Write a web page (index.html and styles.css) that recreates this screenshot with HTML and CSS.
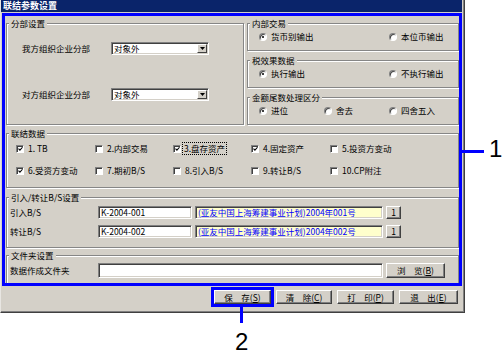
FILE: index.html
```html
<!DOCTYPE html>
<html lang="zh-CN">
<head>
<meta charset="utf-8">
<title>联结参数设置</title>
<link rel="stylesheet" href="styles.css">
</head>
<body>
<div class="stage">
  <div class="window">
    <div class="titlebar">联结参数设置</div>
    <div class="panel">
      <div class="row1">
        <div class="group g-branch">
          <div class="legend">分部设置</div>
          <div class="branch-grid">
            <span class="lbl">我方组织企业分部</span>
            <div class="select"><span class="sel-text">对象外</span><span class="ddbtn"><svg width="5" height="3" viewBox="0 0 5 3"><polygon points="0,0 5,0 2.5,3" fill="#000"/></svg></span></div>
            <span class="lbl">对方组织企业分部</span>
            <div class="select"><span class="sel-text">对象外</span><span class="ddbtn"><svg width="5" height="3" viewBox="0 0 5 3"><polygon points="0,0 5,0 2.5,3" fill="#000"/></svg></span></div>
          </div>
        </div>
        <div class="rcol">
          <div class="group g-opt">
            <div class="legend">内部交易</div>
            <div class="radios">
              <span class="opt"><span class="radio on"></span>货币别输出</span>
              <span class="opt c3"><span class="radio"></span>本位币输出</span>
            </div>
          </div>
          <div class="group g-opt">
            <div class="legend">税效果数据</div>
            <div class="radios">
              <span class="opt"><span class="radio on"></span>执行输出</span>
              <span class="opt c3"><span class="radio"></span>不执行输出</span>
            </div>
          </div>
          <div class="group g-opt">
            <div class="legend">金额尾数处理区分</div>
            <div class="radios">
              <span class="opt"><span class="radio on"></span>进位</span>
              <span class="opt"><span class="radio"></span>舍去</span>
              <span class="opt"><span class="radio"></span>四舍五入</span>
            </div>
          </div>
        </div>
      </div>

      <div class="group g-data">
        <div class="legend">联结数据</div>
        <div class="checks">
          <span class="chk"><span class="box"><svg width="6" height="6" viewBox="0 0 6 6"><path d="M0.6 2.6 L2.3 4.4 L5.4 0.9" stroke="#000" stroke-width="1.3" fill="none"/></svg></span>1. TB</span>
          <span class="chk"><span class="box"></span>2.内部交易</span>
          <span class="chk"><span class="box"><svg width="6" height="6" viewBox="0 0 6 6"><path d="M0.6 2.6 L2.3 4.4 L5.4 0.9" stroke="#000" stroke-width="1.3" fill="none"/></svg></span><span class="focus">3.盘存资产</span></span>
          <span class="chk"><span class="box"><svg width="6" height="6" viewBox="0 0 6 6"><path d="M0.6 2.6 L2.3 4.4 L5.4 0.9" stroke="#000" stroke-width="1.3" fill="none"/></svg></span>4.固定资产</span>
          <span class="chk"><span class="box"></span>5.投资方变动</span>
          <span class="chk"><span class="box"><svg width="6" height="6" viewBox="0 0 6 6"><path d="M0.6 2.6 L2.3 4.4 L5.4 0.9" stroke="#000" stroke-width="1.3" fill="none"/></svg></span>6.受资方变动</span>
          <span class="chk"><span class="box"></span>7.期初B/S</span>
          <span class="chk"><span class="box"></span>8.引入B/S</span>
          <span class="chk"><span class="box"></span>9.转让B/S</span>
          <span class="chk"><span class="box"></span>10.CP附注</span>
        </div>
      </div>

      <div class="group g-bs">
        <div class="legend">引入/转让B/S设置</div>
        <div class="bs-grid">
          <span class="lbl">引入B/S</span>
          <div class="field">K-2004-001</div>
          <div class="field yellow">(亚友中国上海筹建事业计划)2004年001号</div>
          <div class="btn mini">1</div>
          <span class="lbl">转让B/S</span>
          <div class="field">K-2004-002</div>
          <div class="field yellow">(亚友中国上海筹建事业计划)2004年002号</div>
          <div class="btn mini">1</div>
        </div>
      </div>

      <div class="group g-folder">
        <div class="legend">文件夹设置</div>
        <div class="folder-grid">
          <span class="lbl">数据作成文件夹</span>
          <div class="field tall"></div>
          <div class="btn browse">浏　览(<u>B</u>)</div>
        </div>
      </div>
    </div>

    <div class="buttons">
      <div class="btn act w57 save">保　存(<u>S</u>)</div>
      <div class="btn act w56">清　除(<u>C</u>)</div>
      <div class="btn act w57">打　印(<u>P</u>)</div>
      <div class="btn act w59">退　出(<u>E</u>)</div>
    </div>
  </div>

  <div class="callout-line c1-line"></div>
  <div class="callout-num c1-num">1</div>
  <div class="callout-line c2-line"></div>
  <div class="callout-num c2-num">2</div>
</div>
</body>
</html>
```

FILE: styles.css
```css
* { box-sizing: border-box; }

body {
  margin: 0;
  background: #fff;
  font-family: "Noto Sans CJK SC", sans-serif;
  font-size: 8.5px;
  line-height: 11px;
  color: #000;
}

.stage {
  position: relative;
  width: 503px;
  height: 359px;
}

.window {
  width: 465px;
  height: 313px;
  background: #d4d0c8;
  border-left: 1px solid #e8e6e2;
  border-right: 1px solid #404040;
  border-bottom: 1px solid #404040;
  box-shadow: inset -1px -1px 0 #808080;
}

.titlebar {
  width: 461px;
  height: 12px;
  margin-bottom: 1px;
  padding-left: 2px;
  background: #0a246a;
  color: #fff;
  font-weight: bold;
  font-size: 9px;
  line-height: 12px;
}

.panel {
  margin-left: 1px;
  width: 460px;
  height: 273px;
  border: 3px solid #0000ff;
  padding: 7px 0 0 1px;
  overflow: hidden;
  display: flex;
  flex-direction: column;
}

.row1 {
  display: flex;
  gap: 3px;
  height: 102px;
  flex: none;
}

.group {
  border: 1px solid #868686;
  box-shadow: inset 1px 1px 0 #fff, 1px 1px 0 #fff;
  flex: none;
}

.legend {
  width: fit-content;
  height: 11px;
  margin: -6px 0 0 2px;
  padding: 0 2px;
  background: #d4d0c8;
  white-space: nowrap;
}

.g-branch { width: 238px; height: 102px; }

.branch-grid {
  display: grid;
  grid-template-columns: 89px 98px;
  row-gap: 33px;
  align-items: center;
  margin-top: 13px;
  padding-left: 15px;
}

.select {
  height: 13px;
  background: #fff;
  border: 1px solid;
  border-color: #808080 #fff #fff #808080;
  box-shadow: inset 1px 1px 0 #404040, inset -1px -1px 0 #d4d0c8;
  display: flex;
  align-items: center;
  justify-content: space-between;
  padding: 1px;
}

.sel-text { padding-left: 1px; line-height: 11px; }

.ddbtn {
  width: 10px;
  height: 9px;
  background: #d4d0c8;
  border: 1px solid;
  border-color: #fff #404040 #404040 #fff;
  display: flex;
  align-items: center;
  justify-content: center;
}
.ddbtn svg { display: block; }

.rcol {
  width: 212px;
  display: flex;
  flex-direction: column;
  gap: 9px;
}

.g-opt { height: 28px; }

.radios {
  display: grid;
  grid-template-columns: 65px 65px 1fr;
  margin-top: 2px;
  padding-left: 11px;
}

.opt {
  display: flex;
  align-items: center;
  height: 11px;
  white-space: nowrap;
}
.opt.c3 { grid-column: 3; }

.radio {
  position: relative;
  width: 8px;
  height: 8px;
  margin-right: 4px;
  border-radius: 50%;
  background: #fff;
  border: 1px solid;
  border-color: #808080 #fff #fff #808080;
  box-shadow: inset 1px 1px 0 #404040;
  flex: none;
}
.radio.on::after {
  content: "";
  position: absolute;
  left: 2px;
  top: 2px;
  width: 2px;
  height: 2px;
  border-radius: 50%;
  background: #000;
}

.g-data {
  margin-top: 8px;
  height: 55px;
}

.checks {
  display: grid;
  grid-template-columns: 79px 78px 78px 79px 1fr;
  row-gap: 11px;
  margin-top: 4px;
  padding-left: 9px;
}

.chk {
  display: flex;
  align-items: center;
  height: 11px;
  white-space: nowrap;
}

.box {
  width: 8px;
  height: 8px;
  margin-right: 4px;
  background: #fff;
  border: 1px solid;
  border-color: #808080 #fff #fff #808080;
  box-shadow: inset 1px 1px 0 #404040;
  display: flex;
  align-items: center;
  justify-content: center;
  flex: none;
}
.box svg { display: block; margin: 1px 0 0 1px; }

.focus {
  outline: 1px dotted #000;
  outline-offset: 0;
  padding: 0 1px;
  margin-left: -2px;
}

.g-bs {
  margin-top: 9px;
  height: 51px;
}

.bs-grid {
  display: grid;
  grid-template-columns: 85px 94px 188px 15px;
  column-gap: 3px;
  row-gap: 6px;
  align-items: center;
  margin-top: 3px;
  padding-left: 3px;
}

.field {
  height: 13px;
  background: #fff;
  border: 1px solid;
  border-color: #808080 #fff #fff #808080;
  box-shadow: inset 1px 1px 0 #404040, inset -1px -1px 0 #d4d0c8;
  padding: 0 0 0 2px;
  line-height: 11px;
  white-space: nowrap;
  overflow: hidden;
}
.field.yellow {
  background: #ffffcc;
  color: #0000ff;
}
.field.tall { height: 15px; }

.btn {
  background: #d4d0c8;
  border: 1px solid;
  border-color: #fff #404040 #404040 #fff;
  box-shadow: inset -1px -1px 0 #808080;
  text-align: center;
  white-space: nowrap;
}
.btn u { text-decoration: underline; }

.mini {
  height: 13px;
  line-height: 11px;
}

.g-folder {
  margin-top: 7px;
  height: 31px;
}

.folder-grid {
  display: grid;
  grid-template-columns: 85px 285px 59px;
  column-gap: 3px;
  align-items: center;
  margin-top: 2px;
  padding-left: 3px;
}

.browse {
  height: 15px;
  line-height: 13px;
}

.buttons {
  display: flex;
  justify-content: flex-end;
  gap: 5px;
  margin-top: 4px;
  padding-right: 6px;
}

.act {
  height: 14px;
  line-height: 12px;
}
.w56 { width: 56px; }
.w57 { width: 57px; }
.w59 { width: 59px; }

.save {
  outline: 3px solid #0000ff;
  outline-offset: 0;
}

/* annotation overlays */
.callout-line {
  position: absolute;
  background: #0000ff;
}
.c1-line { left: 461px; top: 150px; width: 23px; height: 3px; }
.c2-line { left: 240px; top: 307px; width: 3px; height: 16px; }

.callout-num {
  position: absolute;
  font-family: "Liberation Sans", Arial, sans-serif;
  font-size: 24px;
  line-height: 24px;
  color: #000;
}
.c1-num { left: 489px; top: 137px; }
.c2-num { left: 235px; top: 330px; }
```
